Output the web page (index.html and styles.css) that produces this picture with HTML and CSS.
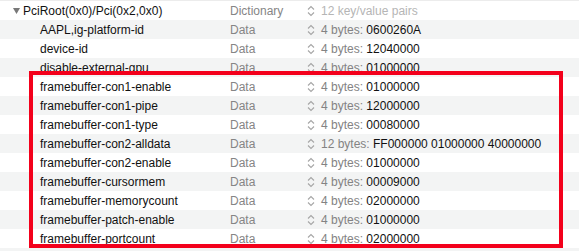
FILE: index.html
```html
<!DOCTYPE html>
<html>
<head>
<meta charset="utf-8">
<link rel="stylesheet" href="styles.css">
</head>
<body>
<div class="view">
  <div class="list">
    <div class="row">
      <div class="key root"><svg class="tri" width="7" height="6" viewBox="0 0 7 6"><polygon points="0,0 7,0 3.5,6" fill="#787878"/></svg><span>PciRoot(0x0)/Pci(0x2,0x0)</span></div>
      <div class="type">Dictionary</div>
      <div class="step"><svg width="8" height="12" viewBox="0 0 8 12"><path d="M1 4.5 L4 1.5 L7 4.5 M1 7.5 L4 10.5 L7 7.5" fill="none" stroke="#a6a6a6" stroke-width="1.1"/></svg></div>
      <div class="val"><span class="muted">12 key/value pairs</span></div>
    </div>
    <div class="row alt">
      <div class="key">AAPL,ig-platform-id</div>
      <div class="type">Data</div>
      <div class="step"><svg width="8" height="12" viewBox="0 0 8 12"><path d="M1 4.5 L4 1.5 L7 4.5 M1 7.5 L4 10.5 L7 7.5" fill="none" stroke="#a6a6a6" stroke-width="1.1"/></svg></div>
      <div class="val"><span class="lbl">4 bytes: </span>0600260A</div>
    </div>
    <div class="row">
      <div class="key">device-id</div>
      <div class="type">Data</div>
      <div class="step"><svg width="8" height="12" viewBox="0 0 8 12"><path d="M1 4.5 L4 1.5 L7 4.5 M1 7.5 L4 10.5 L7 7.5" fill="none" stroke="#a6a6a6" stroke-width="1.1"/></svg></div>
      <div class="val"><span class="lbl">4 bytes: </span>12040000</div>
    </div>
    <div class="row alt">
      <div class="key">disable-external-gpu</div>
      <div class="type">Data</div>
      <div class="step"><svg width="8" height="12" viewBox="0 0 8 12"><path d="M1 4.5 L4 1.5 L7 4.5 M1 7.5 L4 10.5 L7 7.5" fill="none" stroke="#a6a6a6" stroke-width="1.1"/></svg></div>
      <div class="val"><span class="lbl">4 bytes: </span>01000000</div>
    </div>
    <div class="row">
      <div class="key">framebuffer-con1-enable</div>
      <div class="type">Data</div>
      <div class="step"><svg width="8" height="12" viewBox="0 0 8 12"><path d="M1 4.5 L4 1.5 L7 4.5 M1 7.5 L4 10.5 L7 7.5" fill="none" stroke="#a6a6a6" stroke-width="1.1"/></svg></div>
      <div class="val"><span class="lbl">4 bytes: </span>01000000</div>
    </div>
    <div class="row alt">
      <div class="key">framebuffer-con1-pipe</div>
      <div class="type">Data</div>
      <div class="step"><svg width="8" height="12" viewBox="0 0 8 12"><path d="M1 4.5 L4 1.5 L7 4.5 M1 7.5 L4 10.5 L7 7.5" fill="none" stroke="#a6a6a6" stroke-width="1.1"/></svg></div>
      <div class="val"><span class="lbl">4 bytes: </span>12000000</div>
    </div>
    <div class="row">
      <div class="key">framebuffer-con1-type</div>
      <div class="type">Data</div>
      <div class="step"><svg width="8" height="12" viewBox="0 0 8 12"><path d="M1 4.5 L4 1.5 L7 4.5 M1 7.5 L4 10.5 L7 7.5" fill="none" stroke="#a6a6a6" stroke-width="1.1"/></svg></div>
      <div class="val"><span class="lbl">4 bytes: </span>00080000</div>
    </div>
    <div class="row alt">
      <div class="key">framebuffer-con2-alldata</div>
      <div class="type">Data</div>
      <div class="step"><svg width="8" height="12" viewBox="0 0 8 12"><path d="M1 4.5 L4 1.5 L7 4.5 M1 7.5 L4 10.5 L7 7.5" fill="none" stroke="#a6a6a6" stroke-width="1.1"/></svg></div>
      <div class="val"><span class="lbl">12 bytes: </span>FF000000 01000000 40000000</div>
    </div>
    <div class="row">
      <div class="key">framebuffer-con2-enable</div>
      <div class="type">Data</div>
      <div class="step"><svg width="8" height="12" viewBox="0 0 8 12"><path d="M1 4.5 L4 1.5 L7 4.5 M1 7.5 L4 10.5 L7 7.5" fill="none" stroke="#a6a6a6" stroke-width="1.1"/></svg></div>
      <div class="val"><span class="lbl">4 bytes: </span>01000000</div>
    </div>
    <div class="row alt">
      <div class="key">framebuffer-cursormem</div>
      <div class="type">Data</div>
      <div class="step"><svg width="8" height="12" viewBox="0 0 8 12"><path d="M1 4.5 L4 1.5 L7 4.5 M1 7.5 L4 10.5 L7 7.5" fill="none" stroke="#a6a6a6" stroke-width="1.1"/></svg></div>
      <div class="val"><span class="lbl">4 bytes: </span>00009000</div>
    </div>
    <div class="row">
      <div class="key">framebuffer-memorycount</div>
      <div class="type">Data</div>
      <div class="step"><svg width="8" height="12" viewBox="0 0 8 12"><path d="M1 4.5 L4 1.5 L7 4.5 M1 7.5 L4 10.5 L7 7.5" fill="none" stroke="#a6a6a6" stroke-width="1.1"/></svg></div>
      <div class="val"><span class="lbl">4 bytes: </span>02000000</div>
    </div>
    <div class="row alt">
      <div class="key">framebuffer-patch-enable</div>
      <div class="type">Data</div>
      <div class="step"><svg width="8" height="12" viewBox="0 0 8 12"><path d="M1 4.5 L4 1.5 L7 4.5 M1 7.5 L4 10.5 L7 7.5" fill="none" stroke="#a6a6a6" stroke-width="1.1"/></svg></div>
      <div class="val"><span class="lbl">4 bytes: </span>01000000</div>
    </div>
    <div class="row">
      <div class="key">framebuffer-portcount</div>
      <div class="type">Data</div>
      <div class="step"><svg width="8" height="12" viewBox="0 0 8 12"><path d="M1 4.5 L4 1.5 L7 4.5 M1 7.5 L4 10.5 L7 7.5" fill="none" stroke="#a6a6a6" stroke-width="1.1"/></svg></div>
      <div class="val"><span class="lbl">4 bytes: </span>02000000</div>
    </div>
    <div class="row alt tail"></div>
  </div>
  <div class="highlight"></div>
</div>
</body>
</html>
```
FILE: styles.css
```css
html, body {
  margin: 0;
  padding: 0;
  background: #ffffff;
}
body {
  width: 579px;
  height: 252px;
  overflow: hidden;
  font-family: "Liberation Sans", Arial, sans-serif;
  font-size: 12px;
  color: #111111;
}
.view {
  position: relative;
  width: 579px;
  height: 252px;
  overflow: hidden;
}
.list {
  display: flex;
  flex-direction: column;
  border-top: 1px solid #ececec;
}
.row {
  display: flex;
  align-items: center;
  height: 19px;
  white-space: nowrap;
}
.row.alt {
  background: #f3f4f4;
}
.row.tail {
  height: 3px;
}
.key {
  width: 190px;
  padding-left: 40px;
  display: flex;
  align-items: center;
}
.key.root {
  padding-left: 13px;
  width: 217px;
}
.tri {
  margin-right: 3px;
  flex: none;
}
.type {
  width: 77px;
  color: #858585;
}
.step {
  width: 14px;
  display: flex;
  align-items: center;
}
.step svg {
  display: block;
}
.val {
  color: #111111;
}
.lbl {
  color: #838383;
}
.muted {
  color: #b5b5b5;
}
.highlight {
  position: absolute;
  left: 29px;
  top: 71px;
  width: 526px;
  height: 169px;
  border: 4px solid #f3001b;
}
```
